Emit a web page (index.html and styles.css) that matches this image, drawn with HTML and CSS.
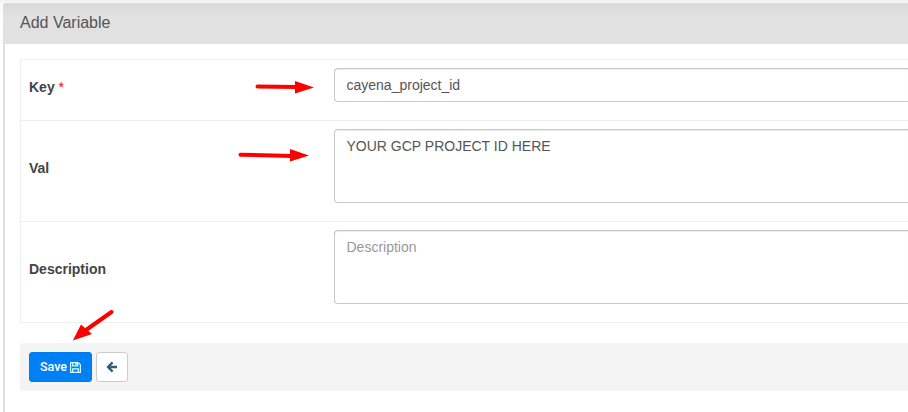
FILE: index.html
```html
<!DOCTYPE html>
<html lang="en">
<head>
<meta charset="utf-8">
<title>Add Variable</title>
<link rel="stylesheet" href="styles.css">
</head>
<body>
<main class="panel">
  <header class="panel-heading">Add Variable</header>
  <form class="panel-body">
    <div class="form-table">
      <div class="row">
        <label class="label key-label" for="key">Key <span class="required">*</span></label>
        <input class="control" id="key" type="text" value="cayena_project_id">
      </div>
      <div class="row">
        <label class="label" for="val">Val</label>
        <textarea class="control area" id="val">YOUR GCP PROJECT ID HERE</textarea>
      </div>
      <div class="row">
        <label class="label" for="description">Description</label>
        <textarea class="control area" id="description" placeholder="Description"></textarea>
      </div>
    </div>
    <div class="actions">
      <button class="btn btn-primary" type="button"><span>Save</span>
        <svg class="save-icon" width="11" height="11" viewBox="0 0 11 11" fill="none" stroke="currentColor" stroke-width="1.2"><path d="M.6 .6H8.2L10.4 2.8V10.400H.6Z"/><path d="M2.700 .6V3.800H7.600V.6M2.700 10.400V6.800H8.300V10.400"/><path d="M6.100 .6V3.300" stroke-width="1.500"/></svg>
      </button>
      <button class="btn btn-back" type="button" aria-label="Back">
        <svg width="12" height="12" viewBox="0 0 12 12" fill="none" stroke="currentColor" stroke-width="2.300"><path d="M6.600 1.400L2 6L6.600 10.600M2.200 6H11"/></svg>
      </button>
    </div>
  </form>
</main>
<svg class="arrows" width="908" height="412" viewBox="0 0 908 412" fill="#f00" stroke="#f00">
  <path d="M257.500 86.500L297 87M240.500 154.700L292 156M111.500 312L86 330" fill="none" stroke-width="4" stroke-linecap="round"/>
  <path d="M295 81L314 87.500L295 93.500ZM290 149L309 155.500L290 161.500ZM72.800 340.500L81 324.500L92 334Z" stroke="none"/>
</svg>
</body>
</html>
```
FILE: styles.css
```css
* { box-sizing: border-box; }
body {
  margin: 0;
  height: 412px;
  padding: 3px 0 0 3px;
  overflow: hidden;
  background: linear-gradient(#f0f0f0, #fafafa 4px, #fff 30px);
  color: #444;
  font: 14px/20px "Liberation Sans", Arial, sans-serif;
}
.panel {
  height: 409px;
  border-left: 2px solid #e0e0e0;
  border-radius: 4px 0 0 0;
  background: #fff;
}
.panel-heading {
  height: 41px;
  margin-left: -2px;
  padding: 10px 17px;
  border-radius: 4px 0 0 0;
  background: linear-gradient(#d8d8d8, #e1e1e1 11px);
  color: #555;
  font-size: 16px;
}
.panel-body { padding: 15px 0 0 15px; }
.form-table { border: solid #eee; border-width: 1px 0 0 1px; }
.row {
  display: grid;
  grid-template-columns: 305px 1fr;
  align-items: center;
  padding: 8px 0 18px 8px;
  border-bottom: 1px solid #eee;
}
.label { font-weight: bold; padding-top: 3px; }
.key-label { padding-top: 4px; }
.required { color: #f00; font-weight: normal; }
.control {
  display: block;
  width: 100%;
  height: 34px;
  margin: 0;
  padding: 6px 12px 6px 11.5px;
  border: 1px solid #c8c8c8;
  border-right: 0;
  border-radius: 4px 0 0 4px;
  background: #fff;
  box-shadow: inset 0 1px 1px rgba(0, 0, 0, .075);
  color: #555;
  font: inherit;
  resize: none;
}
.area { height: 74px; }
.control::placeholder { color: #999; opacity: 1; }
.actions {
  display: flex;
  gap: 4px;
  height: 48px;
  margin-top: 20px;
  padding: 9px;
  border-radius: 3px 0 0 3px;
  background: #f4f4f4;
}
.btn {
  display: flex;
  align-items: center;
  justify-content: center;
  height: 30px;
  padding: 0;
  border: 1px solid #ccc;
  border-radius: 3px;
  font: 500 12.5px/20px Roboto, sans-serif;
}
.btn-primary {
  width: 63px;
  gap: 3px;
  border-color: #007bec;
  background: #0080f5;
  color: #fff;
}
.save-icon { color: #d4ffff; }
.btn-back { width: 32px; background: #fff; color: #315d7d; }
.arrows { position: absolute; top: 0; left: 0; pointer-events: none; }
```
